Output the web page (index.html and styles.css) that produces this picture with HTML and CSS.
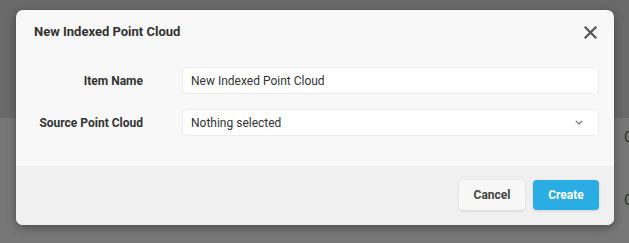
FILE: index.html
```html
<!DOCTYPE html>
<html lang="en">
<head>
    <meta charset="UTF-8">
    <meta name="viewport" content="width=device-width, initial-scale=1.0">
    <title>New Indexed Point Cloud</title>
    <link rel="stylesheet" href="styles.css">
</head>
<body>
    <!-- page behind the dialog, dimmed -->
    <div class="page">
        <div class="page-top"></div>
        <div class="page-list">
            <div class="page-row">C</div>
            <div class="page-row">C</div>
        </div>
    </div>

    <div class="modal">
        <div class="modal-header">
            <h4>New Indexed Point Cloud</h4>
            <button class="close" aria-label="Close">
                <svg width="13" height="13" viewBox="0 0 13 13">
                    <path d="M1.5 1.5 L11.5 11.5 M11.5 1.5 L1.5 11.5" stroke="#555" stroke-width="2.2" stroke-linecap="square"/>
                </svg>
            </button>
        </div>
        <div class="modal-body">
            <div class="form-row">
                <label>Item Name</label>
                <div class="field">New Indexed Point Cloud</div>
            </div>
            <div class="form-row">
                <label>Source Point Cloud</label>
                <div class="field select">
                    <span>Nothing selected</span>
                    <svg width="8" height="5" viewBox="0 0 8 5">
                        <path d="M0.8 0.8 L4 4 L7.2 0.8" fill="none" stroke="#666" stroke-width="1.1"/>
                    </svg>
                </div>
            </div>
        </div>
        <div class="modal-footer">
            <button class="btn btn-default">Cancel</button>
            <button class="btn btn-primary">Create</button>
        </div>
    </div>
</body>
</html>
```

FILE: styles.css
```css
* {
    box-sizing: border-box;
}
html, body {
    margin: 0;
    padding: 0;
    height: 100%;
}
body {
    font-family: Roboto, "Liberation Sans", sans-serif;
    background: #737373;
    overflow: hidden;
    position: relative;
}
.page {
    height: 100%;
    display: flex;
    flex-direction: column;
}
.page-top {
    flex-shrink: 0;
    height: 118px;
    background: #696969;
}
.page-list {
    flex: 1;
    min-height: 0;
    overflow: hidden;
    background: #777777;
    padding-top: 11px;
}
.page-row {
    height: 63px;
    padding-left: 624px;
    font-size: 14px;
    color: #2e2e2e;
    white-space: nowrap;
    overflow: hidden;
}
.modal {
    position: absolute;
    left: 16px;
    top: 10px;
    width: 598px;
    height: 215px;
    background: #f8f8f8;
    border-radius: 7px;
    box-shadow: 0 3px 10px rgba(0,0,0,0.35);
    overflow: hidden;
    display: flex;
    flex-direction: column;
}
.modal-header {
    height: 42px;
    padding: 0 17px 0 18px;
    display: flex;
    align-items: center;
    justify-content: space-between;
}
.modal-header h4 {
    margin: 0;
    font-size: 13px;
    font-weight: bold;
    color: #333;
}
.close {
    background: none;
    border: none;
    padding: 0;
    cursor: pointer;
    display: flex;
    margin-top: 2px;
}
.modal-body {
    flex: 1;
    padding-top: 16px;
}
.form-row {
    display: flex;
    align-items: center;
    margin-bottom: 17px;
}
.form-row label {
    width: 127px;
    text-align: right;
    font-size: 12px;
    font-weight: bold;
    color: #333;
}
.field {
    margin-left: 40px;
    width: 415px;
    height: 25px;
    background: #fff;
    border-radius: 4px;
    box-shadow: 0 0 0 1px #eeeeee;
    font-size: 12px;
    color: #333;
    padding: 0 10px 0 8px;
    display: flex;
    align-items: center;
}
.select {
    justify-content: space-between;
    padding-right: 15px;
}
.modal-footer {
    height: 59px;
    background: #f0f0f0;
    display: flex;
    justify-content: flex-end;
    align-items: center;
    gap: 8px;
    padding: 0 15px 1px 0;
}
.btn {
    height: 30px;
    width: 66px;
    border: none;
    border-radius: 4px;
    font-family: Roboto, "Liberation Sans", sans-serif;
    font-size: 12px;
    font-weight: bold;
    cursor: pointer;
    box-shadow: 0 1px 3px rgba(0,0,0,0.12);
}
.btn-default {
    background: #f7f7f7;
    color: #444;
}
.btn-primary {
    background: #2aade3;
    color: #fff;
}
```
